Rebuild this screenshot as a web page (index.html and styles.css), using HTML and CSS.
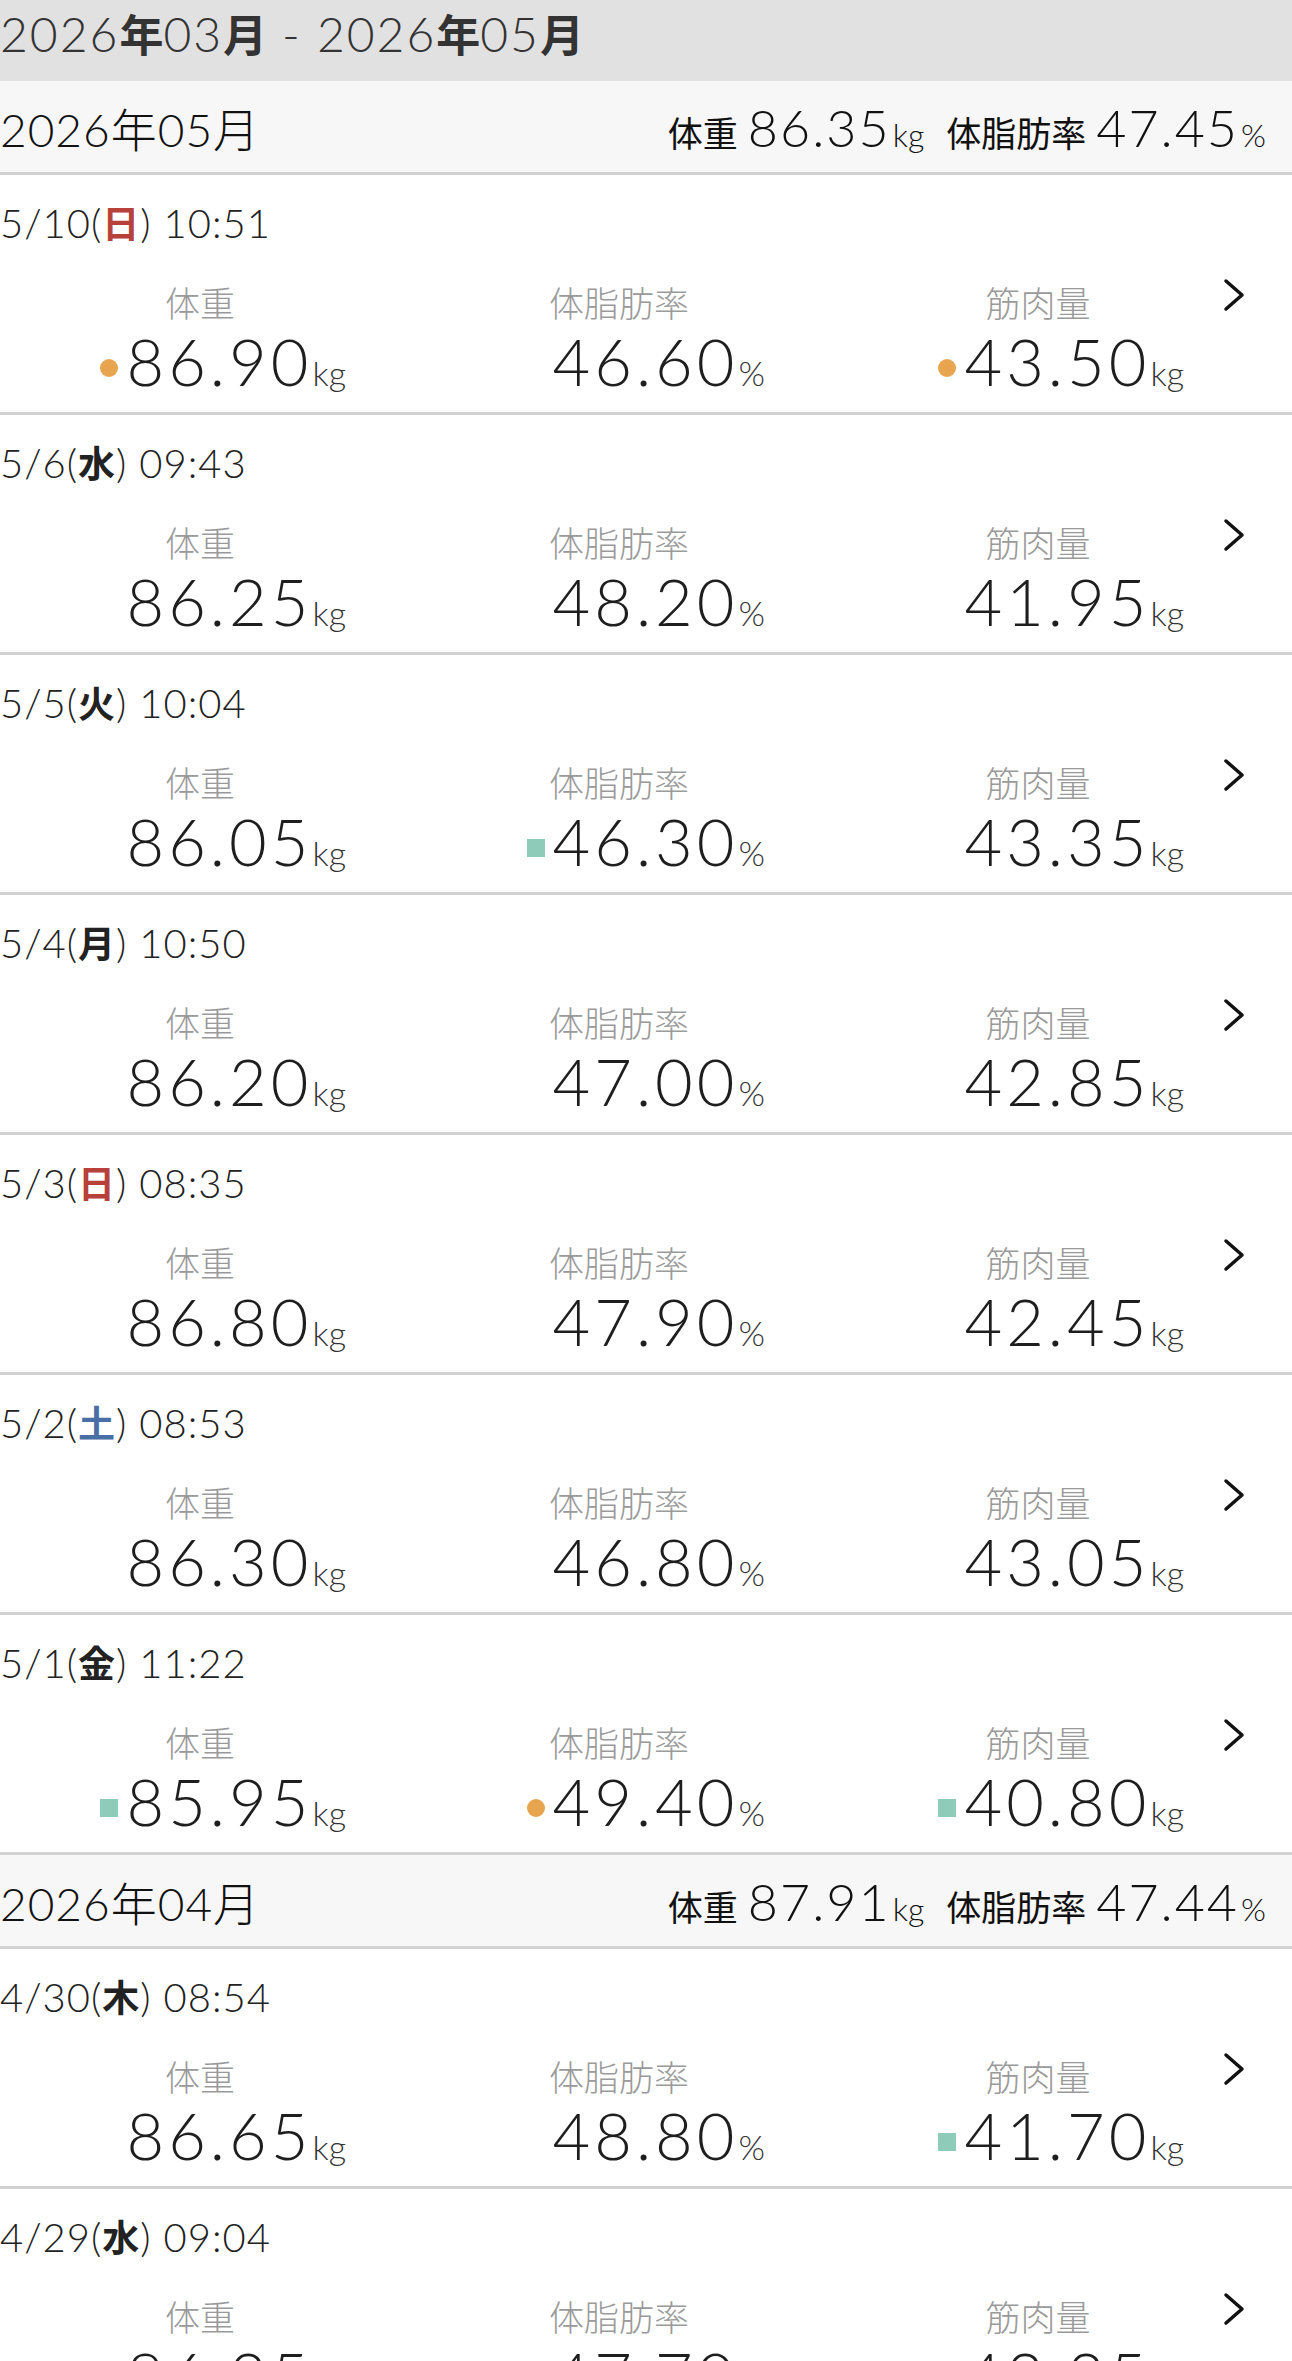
FILE: index.html
```html
<!DOCTYPE html>
<html lang="ja">
<head>
    <meta charset="UTF-8">
    <title>測定履歴</title>
    <link rel="stylesheet" href="styles.css">
</head>
<body>
    <div class="range">2026<b>年</b>03<b>月</b> - 2026<b>年</b>05<b>月</b></div>

    <div class="month">
        <div class="month-title">2026年05月</div>
        <div class="month-avg">
            <span class="avg-label">体重</span><span class="avg-num">86.35</span><span class="avg-unit">kg</span>
            <span class="avg-label gap">体脂肪率</span><span class="avg-num">47.45</span><span class="avg-unit">%</span>
        </div>
    </div>

    <div class="entry">
        <div class="entry-date">5/10(<span class="dow sun">日</span>) 10:51</div>
        <div class="metrics">
            <div class="metric"><div class="metric-label">体重</div><div class="metric-value"><i class="mark up"></i><span class="num">86.90</span><span class="unit">kg</span></div></div>
            <div class="metric"><div class="metric-label">体脂肪率</div><div class="metric-value"><span class="num">46.60</span><span class="unit">%</span></div></div>
            <div class="metric"><div class="metric-label">筋肉量</div><div class="metric-value"><i class="mark up"></i><span class="num">43.50</span><span class="unit">kg</span></div></div>
            <svg class="chevron" viewBox="0 0 22 34"><path d="M3 3 L19 17 L3 31"/></svg>
        </div>
    </div>

    <div class="entry">
        <div class="entry-date">5/6(<span class="dow">水</span>) 09:43</div>
        <div class="metrics">
            <div class="metric"><div class="metric-label">体重</div><div class="metric-value"><span class="num">86.25</span><span class="unit">kg</span></div></div>
            <div class="metric"><div class="metric-label">体脂肪率</div><div class="metric-value"><span class="num">48.20</span><span class="unit">%</span></div></div>
            <div class="metric"><div class="metric-label">筋肉量</div><div class="metric-value"><span class="num">41.95</span><span class="unit">kg</span></div></div>
            <svg class="chevron" viewBox="0 0 22 34"><path d="M3 3 L19 17 L3 31"/></svg>
        </div>
    </div>

    <div class="entry">
        <div class="entry-date">5/5(<span class="dow">火</span>) 10:04</div>
        <div class="metrics">
            <div class="metric"><div class="metric-label">体重</div><div class="metric-value"><span class="num">86.05</span><span class="unit">kg</span></div></div>
            <div class="metric"><div class="metric-label">体脂肪率</div><div class="metric-value"><i class="mark down"></i><span class="num">46.30</span><span class="unit">%</span></div></div>
            <div class="metric"><div class="metric-label">筋肉量</div><div class="metric-value"><span class="num">43.35</span><span class="unit">kg</span></div></div>
            <svg class="chevron" viewBox="0 0 22 34"><path d="M3 3 L19 17 L3 31"/></svg>
        </div>
    </div>

    <div class="entry">
        <div class="entry-date">5/4(<span class="dow">月</span>) 10:50</div>
        <div class="metrics">
            <div class="metric"><div class="metric-label">体重</div><div class="metric-value"><span class="num">86.20</span><span class="unit">kg</span></div></div>
            <div class="metric"><div class="metric-label">体脂肪率</div><div class="metric-value"><span class="num">47.00</span><span class="unit">%</span></div></div>
            <div class="metric"><div class="metric-label">筋肉量</div><div class="metric-value"><span class="num">42.85</span><span class="unit">kg</span></div></div>
            <svg class="chevron" viewBox="0 0 22 34"><path d="M3 3 L19 17 L3 31"/></svg>
        </div>
    </div>

    <div class="entry">
        <div class="entry-date">5/3(<span class="dow sun">日</span>) 08:35</div>
        <div class="metrics">
            <div class="metric"><div class="metric-label">体重</div><div class="metric-value"><span class="num">86.80</span><span class="unit">kg</span></div></div>
            <div class="metric"><div class="metric-label">体脂肪率</div><div class="metric-value"><span class="num">47.90</span><span class="unit">%</span></div></div>
            <div class="metric"><div class="metric-label">筋肉量</div><div class="metric-value"><span class="num">42.45</span><span class="unit">kg</span></div></div>
            <svg class="chevron" viewBox="0 0 22 34"><path d="M3 3 L19 17 L3 31"/></svg>
        </div>
    </div>

    <div class="entry">
        <div class="entry-date">5/2(<span class="dow sat">土</span>) 08:53</div>
        <div class="metrics">
            <div class="metric"><div class="metric-label">体重</div><div class="metric-value"><span class="num">86.30</span><span class="unit">kg</span></div></div>
            <div class="metric"><div class="metric-label">体脂肪率</div><div class="metric-value"><span class="num">46.80</span><span class="unit">%</span></div></div>
            <div class="metric"><div class="metric-label">筋肉量</div><div class="metric-value"><span class="num">43.05</span><span class="unit">kg</span></div></div>
            <svg class="chevron" viewBox="0 0 22 34"><path d="M3 3 L19 17 L3 31"/></svg>
        </div>
    </div>

    <div class="entry">
        <div class="entry-date">5/1(<span class="dow">金</span>) 11:22</div>
        <div class="metrics">
            <div class="metric"><div class="metric-label">体重</div><div class="metric-value"><i class="mark down"></i><span class="num">85.95</span><span class="unit">kg</span></div></div>
            <div class="metric"><div class="metric-label">体脂肪率</div><div class="metric-value"><i class="mark up"></i><span class="num">49.40</span><span class="unit">%</span></div></div>
            <div class="metric"><div class="metric-label">筋肉量</div><div class="metric-value"><i class="mark down"></i><span class="num">40.80</span><span class="unit">kg</span></div></div>
            <svg class="chevron" viewBox="0 0 22 34"><path d="M3 3 L19 17 L3 31"/></svg>
        </div>
    </div>

    <div class="month">
        <div class="month-title">2026年04月</div>
        <div class="month-avg">
            <span class="avg-label">体重</span><span class="avg-num">87.91</span><span class="avg-unit">kg</span>
            <span class="avg-label gap">体脂肪率</span><span class="avg-num">47.44</span><span class="avg-unit">%</span>
        </div>
    </div>

    <div class="entry">
        <div class="entry-date">4/30(<span class="dow">木</span>) 08:54</div>
        <div class="metrics">
            <div class="metric"><div class="metric-label">体重</div><div class="metric-value"><span class="num">86.65</span><span class="unit">kg</span></div></div>
            <div class="metric"><div class="metric-label">体脂肪率</div><div class="metric-value"><span class="num">48.80</span><span class="unit">%</span></div></div>
            <div class="metric"><div class="metric-label">筋肉量</div><div class="metric-value"><i class="mark down"></i><span class="num">41.70</span><span class="unit">kg</span></div></div>
            <svg class="chevron" viewBox="0 0 22 34"><path d="M3 3 L19 17 L3 31"/></svg>
        </div>
    </div>

    <div class="entry">
        <div class="entry-date">4/29(<span class="dow">水</span>) 09:04</div>
        <div class="metrics">
            <div class="metric"><div class="metric-label">体重</div><div class="metric-value"><span class="num">86.35</span><span class="unit">kg</span></div></div>
            <div class="metric"><div class="metric-label">体脂肪率</div><div class="metric-value"><span class="num">47.70</span><span class="unit">%</span></div></div>
            <div class="metric"><div class="metric-label">筋肉量</div><div class="metric-value"><span class="num">42.35</span><span class="unit">kg</span></div></div>
            <svg class="chevron" viewBox="0 0 22 34"><path d="M3 3 L19 17 L3 31"/></svg>
        </div>
    </div>
</body>
</html>
```

FILE: styles.css
```css
body {
    margin: 0;
    font-family: "Lato", "Noto Sans CJK JP", sans-serif;
    font-weight: 300;
    color: #222;
    background-color: #fff;
}
.range {
    height: 81px;
    box-sizing: border-box;
    padding-top: 10px;
    background-color: #e1e1e1;
    font-size: 48px;
    line-height: 48px;
    letter-spacing: 2px;
    color: #333;
    white-space: nowrap;
}
.range b {
    font-weight: 700;
    font-size: 44px;
    letter-spacing: 0;
}
.month {
    height: 94px;
    box-sizing: border-box;
    display: flex;
    justify-content: space-between;
    align-items: center;
    padding-right: 26px;
    background-color: #f7f7f7;
    border-bottom: 3px solid #d2d2d2;
    white-space: nowrap;
}
.month-title {
    font-size: 46px;
    letter-spacing: 1px;
    color: #111;
}
.month-avg {
    display: flex;
    align-items: baseline;
}
.avg-label {
    font-size: 35px;
    font-weight: 400;
    color: #111;
    margin-right: 10px;
}
.avg-label.gap {
    margin-left: 22px;
}
.avg-num {
    font-size: 52px;
    letter-spacing: 2px;
    color: #111;
}
.avg-unit {
    font-size: 32px;
    margin-left: 2px;
    color: #111;
}
.entry {
    height: 240px;
    box-sizing: border-box;
    padding-top: 28px;
    border-bottom: 3px solid #d2d2d2;
}
.entry-date {
    font-size: 40px;
    line-height: 40px;
    letter-spacing: 1px;
    color: #222;
    white-space: nowrap;
}
.dow {
    font-weight: 700;
    font-size: 37px;
}
.dow.sun {
    color: #b6423b;
}
.dow.sat {
    color: #4a6ea6;
}
.metrics {
    display: flex;
    align-items: flex-start;
    gap: 127px;
    padding-left: 54px;
    margin-top: 39px;
}
.metric {
    width: 292px;
}
.metric-label {
    font-size: 35px;
    line-height: 40px;
    text-align: center;
    color: #9a9a9a;
}
.metric-value {
    margin-top: 6px;
    line-height: 64px;
    text-align: right;
    white-space: nowrap;
}
.num {
    font-size: 65px;
    letter-spacing: 4px;
    color: #1e1e1e;
}
.unit {
    font-size: 34px;
    margin-left: 0;
    color: #333;
}
.mark {
    display: inline-block;
    width: 18px;
    height: 18px;
    margin-right: 8px;
    vertical-align: 9px;
}
.mark.up {
    border-radius: 50%;
    background-color: #e8a44f;
}
.mark.down {
    background-color: #8ecbb9;
}
.chevron {
    width: 22px;
    height: 34px;
    margin-left: -88px;
    margin-top: -5px;
    fill: none;
    stroke: #111;
    stroke-width: 3.5;
    stroke-linecap: round;
    stroke-linejoin: round;
}
```
